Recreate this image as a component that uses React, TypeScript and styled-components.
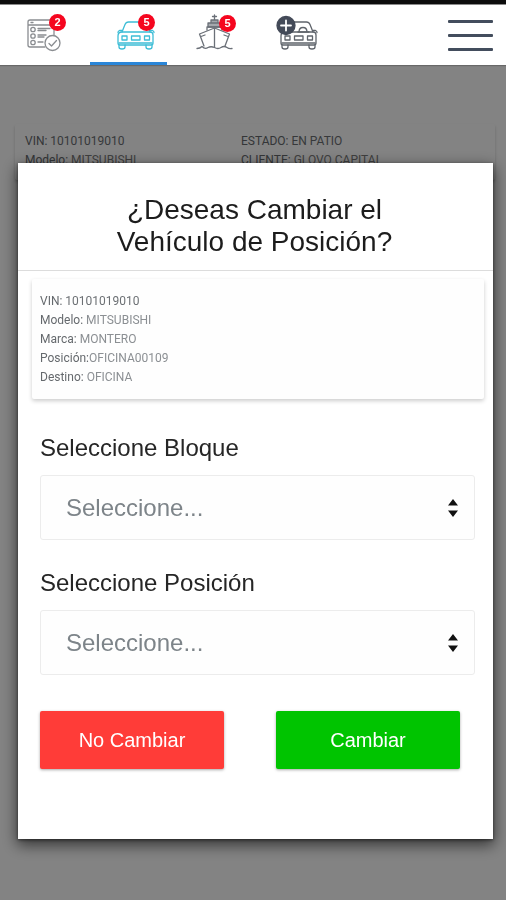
import React from "react";
import styled, { createGlobalStyle } from "styled-components";

const sans = '"Liberation Sans", Arial, sans-serif';

const GlobalStyle = createGlobalStyle`
  * { box-sizing: border-box; }
  body { margin: 0; background: #fff; font-family: ${sans}; }
  button, select { font: inherit; }
`;

const Page = styled.div`
  min-height: 100vh;
  display: flex;
  flex-direction: column;
`;

const StatusBar = styled.div`
  height: 5px;
  background: #0c0c0c;
  border-bottom: 1px solid #8a8a8a;
`;

const Header = styled.header`
  position: sticky;
  top: 0;
  z-index: 2;
  background: #fff;
  box-shadow: 0 1px 1px rgba(0, 0, 0, 0.2);
`;

const Toolbar = styled.div`
  display: flex;
  align-items: center;
  justify-content: space-between;
  height: 60px;
  padding: 0 13px 0 6px;
`;

const Tabs = styled.nav`
  display: flex;
  gap: 7px;
`;

const Tab = styled.button<{ $color: string; $active?: boolean }>`
  position: relative;
  width: 77px;
  height: 60px;
  padding: 0;
  border: 0;
  background: none;
  color: ${(p) => p.$color};
  box-shadow: ${(p) => (p.$active ? "inset 0 -3px #2a86d8" : "none")};
`;

const Glyph = styled.svg`
  display: block;
  fill: none;
  stroke: currentColor;
  stroke-width: 1.3;
  stroke-linecap: round;
  stroke-linejoin: round;
`;

const Badge = styled.span<{ $x: number; $y: number }>`
  position: absolute;
  left: ${(p) => p.$x}px;
  top: ${(p) => p.$y}px;
  width: 17px;
  height: 17px;
  border-radius: 50%;
  background: #f5061f;
  color: #fff;
  font-size: 11px;
  font-weight: 700;
  line-height: 17px;
  text-align: center;
`;

const MenuButton = styled.button`
  display: flex;
  flex-direction: column;
  gap: 11px;
  width: 45px;
  padding: 0;
  border: 0;
  background: none;
`;

const MenuBar = styled.span`
  height: 3px;
  border-radius: 1px;
  background: #434d5d;
`;

const Main = styled.main`
  padding: 59px 11px 0 15px;
`;

const VehicleRow = styled.article`
  display: grid;
  grid-template-columns: 216px 1fr;
  padding: 8px 10px 10px;
  border-radius: 2px;
  box-shadow: 0 2px 3px rgba(0, 0, 0, 0.2);
`;

const Details = styled.dl<{ $strong?: boolean }>`
  margin: 0;
  font-family: Roboto, sans-serif;
  font-size: 12px;
  line-height: 19px;
  color: ${(p) => (p.$strong ? "#7a7a7a" : "#8b8f93")};
`;

const Detail = styled.div`
  dt, dd { display: inline; margin: 0; }
  dt { color: #65696d; white-space: pre; }
  &:first-child dd { color: #6c7074; }
`;

const Overlay = styled.div`
  position: fixed;
  inset: 0;
  z-index: 1;
  overflow-y: auto;
  padding: 163px 13px 61px 18px;
  background: rgba(0, 0, 0, 0.485);
`;

const Dialog = styled.section`
  padding-bottom: 70px;
  background: #fff;
  box-shadow: 0 5px 14px 1px rgba(0, 0, 0, 0.6), 0 1px 3px rgba(0, 0, 0, 0.5);
`;

const Title = styled.h1`
  margin: 0;
  padding: 31px 92px 12px 90px;
  border-bottom: 1px solid #dcdcdc;
  font-size: 28px;
  font-weight: 400;
  line-height: 32px;
  text-align: center;
  color: #1c1c1c;
`;

const VehicleCard = styled.div`
  margin: 8px 9px 0 14px;
  padding: 13px 8px 12px;
  border-radius: 2px;
  background: #fefefe;
  box-shadow: 0 2px 4px rgba(0, 0, 0, 0.2);
`;

const Fields = styled.div`
  display: grid;
  gap: 29px;
  padding: 35px 18px 0 22px;
`;

const Field = styled.div`
  display: grid;
  gap: 13px;
`;

const Label = styled.label`
  font-size: 24px;
  line-height: 28px;
  color: #262626;
`;

const SelectBox = styled.div`
  display: grid;
  align-items: center;

  > * { grid-area: 1 / 1; }
  > svg { justify-self: end; margin-right: 16px; pointer-events: none; }
`;

const Select = styled.select`
  appearance: none;
  width: 100%;
  height: 65px;
  padding: 0 40px 0 25px;
  border: 1px solid #ececec;
  border-radius: 3px;
  background: #fefefe;
  color: #7d8489;
  font-size: 24px;
`;

const Actions = styled.div`
  display: grid;
  grid-template-columns: 1fr 1fr;
  gap: 52px;
  padding: 36px 33px 0 22px;
`;

const ActionButton = styled.button<{ $tone: "danger" | "success" }>`
  height: 58px;
  border: 0;
  border-radius: 2px;
  background: ${(p) => (p.$tone === "danger" ? "#ff3c38" : "#00c400")};
  color: #fff;
  font-size: 20px;
  box-shadow: 0 1px 3px rgba(0, 0, 0, 0.35);
`;

function CarShape() {
  return (
    <>
      <path d="M32 27 35 19.500Q36 17 38.500 17H53.500Q56 17 57 19.500L60 27" />
      <path d="M32 27H60Q63 27 63 30V38Q63 40 61 40H30Q28 40 28 38V31Q28 27 32 27Z" />
      <path d="M32 25.500H29.500Q28 26 28 27.500M60 25.500H62.500Q64 26 64 27.500" />
      <path d="M29 40V42Q29 44 32 44T35 42V40M56 40V42Q56 44 59 44T62 42V40" />
      <path d="M32 31H37V35H32ZM54.500 31H59.500V35H54.500ZM41.500 31H50V35H41.500ZM29 38H62" />
    </>
  );
}

function ChecklistIcon() {
  return (
    <Glyph width="77" height="60" viewBox="0 0 77 60" aria-hidden="true">
      <path d="M39 42H24Q22 42 22 40V17Q22 15 24 15H46Q48 15 48 17V30M22 20H48" />
      <path d="M25 17.500H27" />
      <circle cx="27" cy="24.500" r="2.200" />
      <circle cx="27" cy="31" r="2.200" />
      <circle cx="27" cy="37.500" r="2.200" />
      <path d="M32 23.500H44M32 25.500H40M32 30H40M32 32H38M32 37H37" />
      <circle cx="46.500" cy="38" r="7.500" fill="#fff" />
      <path d="M43 38.500 45.500 41 50.500 35.500" />
    </Glyph>
  );
}

function CarIcon() {
  return (
    <Glyph width="77" height="60" viewBox="0 0 77 60" aria-hidden="true">
      <CarShape />
    </Glyph>
  );
}

function ShipIcon() {
  return (
    <Glyph width="77" height="60" viewBox="0 0 77 60" aria-hidden="true">
      <path d="M40.500 10V15M38.500 11.500H42.500M40.500 23V42" />
      <path d="M37 15H44V18H37ZM34 18H47V22H34Z" fill="#a4a8ad" />
      <path d="M33 25V22H48V25" />
      <path d="M30 41 25.500 29 40.500 23 55.500 29 51 41M27 31.500 31 30M54 31.500 50 30" />
      <path d="M23 43.500Q26 43.500 28 41.500 31 44.500 34 42.500 37 41 40.500 42.500 44 44.500 47 42.500 50 40.500 53 42.500 55 44 58 43.500" />
    </Glyph>
  );
}

function AddCarIcon() {
  return (
    <Glyph width="77" height="60" viewBox="0 0 77 60" aria-hidden="true">
      <g transform="translate(-5 0)">
        <CarShape />
        <path d="M46 27Q46 22.500 50 22.500T54 27M45 27H56" />
      </g>
      <circle cx="28" cy="20.500" r="9" fill="#434a58" stroke="#434a58" />
      <path d="M28 15.500V25.500M23 20.500H33" stroke="#fff" strokeWidth="1.800" />
    </Glyph>
  );
}

function SortArrows() {
  return (
    <svg width="12" height="18" viewBox="0 0 12 18" fill="#111" aria-hidden="true">
      <path d="M6 0 11 6.500H1ZM6 18 1 11.500H11Z" />
    </svg>
  );
}

type Item = [string, string];

function DetailList({ items, strong }: { items: Item[]; strong?: boolean }) {
  return (
    <Details $strong={strong}>
      {items.map(([name, value]) => (
        <Detail key={name}>
          <dt>{name}</dt>
          <dd>{value}</dd>
        </Detail>
      ))}
    </Details>
  );
}

function SelectField({ id, label }: { id: string; label: string }) {
  return (
    <Field>
      <Label htmlFor={id}>{label}</Label>
      <SelectBox>
        <Select id={id} defaultValue="">
          <option value="">Seleccione...</option>
        </Select>
        <SortArrows />
      </SelectBox>
    </Field>
  );
}

export default function App() {
  return (
    <Page>
      <GlobalStyle />
      <Header>
        <StatusBar />
        <Toolbar>
          <Tabs>
            <Tab $color="#8a8d91" aria-label="Tareas">
              <ChecklistIcon />
              <Badge $x={43} $y={9}>2</Badge>
            </Tab>
            <Tab $color="#3dbdd6" $active aria-label="Vehículos">
              <CarIcon />
              <Badge $x={48} $y={9}>5</Badge>
            </Tab>
            <Tab $color="#6b7078" aria-label="Barcos">
              <ShipIcon />
              <Badge $x={45} $y={10}>5</Badge>
            </Tab>
            <Tab $color="#5f646b" aria-label="Agregar vehículo">
              <AddCarIcon />
            </Tab>
          </Tabs>
          <MenuButton aria-label="Menú">
            <MenuBar />
            <MenuBar />
            <MenuBar />
          </MenuButton>
        </Toolbar>
      </Header>
      <Main>
        <VehicleRow>
          <DetailList strong items={[["VIN: ", "10101019010"], ["Modelo: ", "MITSUBISHI"]]} />
          <DetailList strong items={[["ESTADO: ", "EN PATIO"], ["CLIENTE: ", "GLOVO CAPITAL"]]} />
        </VehicleRow>
      </Main>
      <Overlay>
        <Dialog role="dialog" aria-modal="true" aria-labelledby="dialog-title">
          <Title id="dialog-title">¿Deseas Cambiar el Vehículo de Posición?</Title>
          <VehicleCard>
            <DetailList
              items={[
                ["VIN: ", "10101019010"],
                ["Modelo: ", "MITSUBISHI"],
                ["Marca: ", "MONTERO"],
                ["Posición:", "OFICINA00109"],
                ["Destino: ", "OFICINA"],
              ]}
            />
          </VehicleCard>
          <Fields>
            <SelectField id="bloque" label="Seleccione Bloque" />
            <SelectField id="posicion" label="Seleccione Posición" />
          </Fields>
          <Actions>
            <ActionButton type="button" $tone="danger">No Cambiar</ActionButton>
            <ActionButton type="button" $tone="success">Cambiar</ActionButton>
          </Actions>
        </Dialog>
      </Overlay>
    </Page>
  );
}
